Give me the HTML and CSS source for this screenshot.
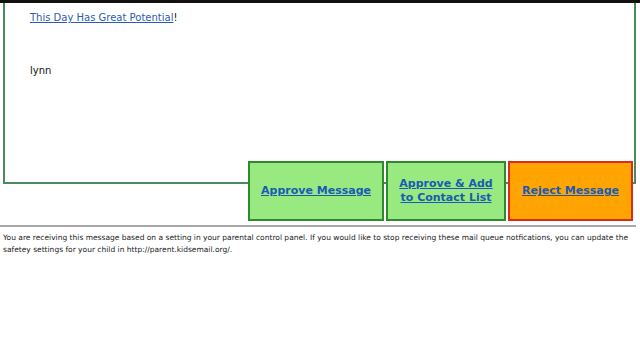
FILE: index.html
```html
<!DOCTYPE html>
<html lang="en">
<head>
    <meta charset="UTF-8">
    <title>Mail Queue</title>
    <link rel="stylesheet" href="styles.css">
</head>
<body>
    <div class="topbar"></div>
    <div class="page">
        <div class="message">
            <p class="title"><a href="#">This Day Has Great Potential</a>!</p>
            <p class="sig">lynn</p>
        </div>
        <div class="actions">
            <a href="#" class="btn approve first">Approve Message</a>
            <a href="#" class="btn approve second">Approve &amp; Add to Contact List</a>
            <a href="#" class="btn reject">Reject Message</a>
        </div>
        <hr class="divider">
        <p class="notice">You are receiving this message based on a setting in your parental control panel. If you would like to stop receiving these mail queue notfications, you can update the safetey settings for your child in http://parent.kidsemail.org/.</p>
    </div>
</body>
</html>
```

FILE: styles.css
```css
body {
    margin: 0;
    background: #fff;
    font-family: "DejaVu Sans", Verdana, sans-serif;
    color: #111;
}
.topbar {
    height: 3px;
    background: #111;
}
.page {
    width: 636px;
}
.message {
    margin-left: 3px;
    height: 179px;
    border: 2px solid #4b8a5c;
    border-top: none;
    padding-left: 25px;
}
.title {
    margin: 0;
    padding-top: 9px;
    font-size: 10px;
}
.title a {
    color: #2a5db0;
}
.sig {
    margin: 42px 0 0;
    font-size: 10px;
}
.actions {
    display: flex;
    justify-content: flex-end;
    gap: 2px;
    margin-top: -23px;
    padding-right: 3px;
}
.btn {
    box-sizing: border-box;
    height: 60px;
    display: flex;
    align-items: center;
    justify-content: center;
    text-align: center;
    font-size: 11px;
    font-weight: bold;
    line-height: 14px;
    color: #1a5ab4;
    border: 2px solid #2f8a2f;
    background: #98ea80;
}
.first { width: 136px; }
.second { width: 120px; padding: 0 6px; }
.reject {
    width: 125px;
    background: #ffa400;
    border-color: #dc2a1c;
}
.divider {
    margin: 4px 0 0;
    height: 0;
    border: none;
    border-top: 2px solid #a8a8a8;
}
.notice {
    margin: 5px 0 0 3px;
    font-size: 7.5px;
    line-height: 12px;
    color: #1a1a1a;
}
```
